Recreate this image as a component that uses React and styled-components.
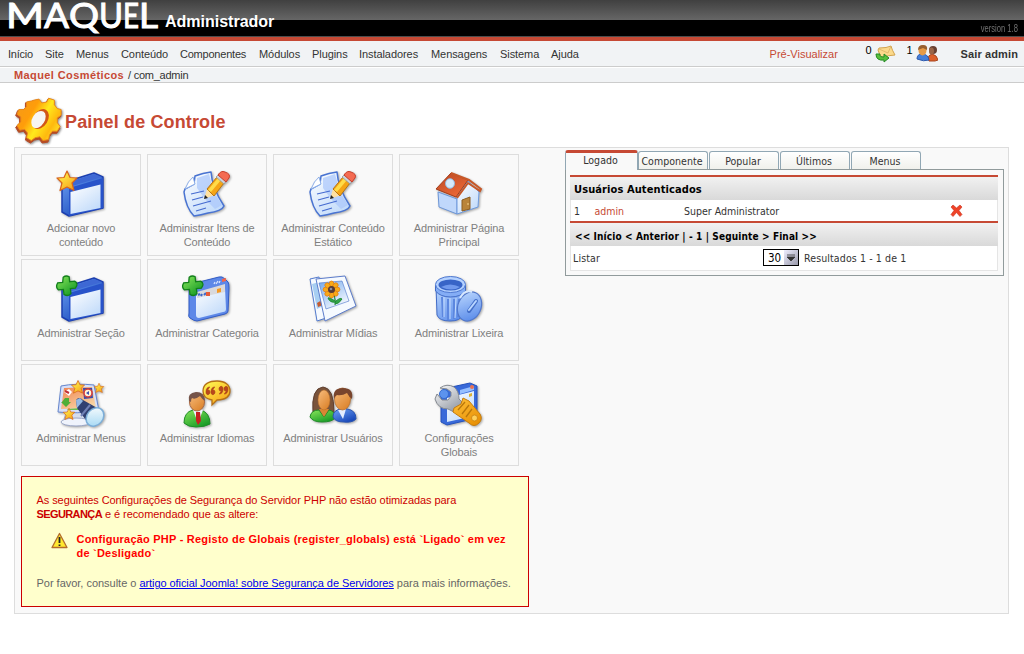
import React from "react";
import styled, { createGlobalStyle } from "styled-components";

const GlobalStyle = createGlobalStyle`
  * { box-sizing: border-box; }
  body { margin: 0; background: #fff; color: #333; font: 11px/14px "Liberation Sans", Arial, sans-serif; }
  a { color: inherit; text-decoration: none; }
`;
const Page = styled.div`width: 1024px; height: 654px; overflow: hidden;`;
const Header = styled.header`
  height: 41px; display: flex; align-items: flex-start; padding-left: 8px;
  background: linear-gradient(#404040 0, #666 20px, #000 20px, #000 36px, #4d4d4d 36px, #4d4d4d 37px, #c64934 37px);
`;
const Logo = styled.svg`width: 157px; height: 36px; display: block; overflow: visible;`;
const Product = styled.h1`
  margin: 13px 0 0; color: #fff; font-size: 16px; line-height: 18px; letter-spacing: 0; white-space: nowrap;
`;
const Version = styled.span`
  margin: 23px 6px 0 auto; color: #737373; font: 10px/12px "Liberation Sans", sans-serif;
  white-space: nowrap; transform: scaleX(0.76); transform-origin: right center;
`;
const MenuBar = styled.nav`
  height: 26px; display: flex; align-items: center; padding: 1px 6px 0 8px;
  background: #f1f3f5; border-bottom: 1px solid #ccc; white-space: nowrap;
`;
const MenuItem = styled.a`width: ${(p) => p.$w}px; letter-spacing: ${(p) => p.$ls ?? -0.07}px;`;
const Preview = styled.a`margin-left: auto; width: 96px; color: #c64934; letter-spacing: 0;`;
const Counter = styled.div`
  display: flex; align-items: flex-start; gap: ${(p) => p.$gap}px; width: ${(p) => p.$w}px; height: 22px; line-height: 14px; color: #000;
  svg { margin-top: 2px; }
`;
const Logout = styled.a`font-weight: bold; letter-spacing: 0.12px;`;
const Breadcrumb = styled.div`
  height: 16px; display: flex; gap: 4px; padding-left: 14px; line-height: 15px;
  background: #f1f3f5; border-top: 1px solid #fff; border-bottom: 1px solid #ccc; letter-spacing: -0.25px;
  b { color: #c64934; letter-spacing: 0.4px; }
`;
const Title = styled.h2`
  margin: 0; height: 64px; padding: 13px 0 0 14px; display: flex; gap: 2px;
  color: #c64934; font-size: 18px; line-height: 52px; letter-spacing: 0.14px;
`;
const Panel = styled.main`
  margin: 0 15px 0 14px; height: 467px; padding: 6px 4px 0 6px; display: flex; justify-content: space-between;
  background: #f9f9f9; border: 1px solid #ddd;
`;
const Left = styled.section`width: 508px;`;
const Grid = styled.div`display: grid; grid-template-columns: repeat(4, 120px); grid-auto-rows: 102px; gap: 3px 6px;`;
const Card = styled.a`
  border: 1px solid #ddd; padding: 14px 4px 0; display: flex; flex-direction: column; align-items: center;
  color: #808080; text-align: center; letter-spacing: -0.14px;
  svg { display: block; width: 48px; height: 50px; margin-bottom: 2px; overflow: visible; filter: drop-shadow(1px 1px 1px #0005); }
  span { white-space: pre-line; }
`;
const Warning = styled.section`
  margin-top: 10px; height: 131px; padding: 16px 14px 0 14.5px; border: 1px solid #c00; background: #ffc; color: #c00;
  white-space: nowrap; letter-spacing: -0.07px;
  p { margin: 0; }
`;
const Keyword = styled.b`letter-spacing: -0.6px;`;
const Alert = styled.div`
  display: flex; margin: 11px 0 16px 14.5px; gap: 8.5px; color: #f00; font-weight: bold; letter-spacing: 0.22px;
`;
const More = styled.p`color: #666; letter-spacing: -0.02px; a { color: #00e; text-decoration: underline; letter-spacing: -0.07px; }`;
const Right = styled.aside`
  width: 439px; margin-top: -4px; font: 10.5px/14px "DejaVu Sans Condensed", "DejaVu Sans", Tahoma, sans-serif;
  white-space: nowrap;
`;
const Tabs = styled.div`display: flex; align-items: flex-end; height: 20px; gap: 1px; position: relative; margin-bottom: -1px;`;
const Tab = styled.button`
  width: ${(p) => (p.$active ? 73 : 70)}px; height: ${(p) => (p.$active ? 20 : 18)}px; padding: 0 2px 0 0;
  margin-right: ${(p) => (p.$active ? -1 : 0)}px; margin-bottom: ${(p) => (p.$active ? 0 : 1)}px;
  border: 1px solid #91a7b4; border-bottom: 0; border-radius: 3px 3px 0 0;
  border-top: ${(p) => (p.$active ? "3px solid #c64934" : "1px solid #91a7b4")};
  background: ${(p) => (p.$active ? "#f9f9f9" : "linear-gradient(#fff, #f1f1ec)")};
  color: #333; font: inherit; line-height: 17px; letter-spacing: 0.05px;
  span { display: block; height: ${(p) => (p.$active ? 18 : 17)}px; line-height: ${(p) => (p.$active ? 14 : 18)}px; }
`;
const TabBody = styled.div`height: 107px; padding: 5px 5px 0 4px; border: 1px solid #919b9c;`;
const Table = styled.div`background: #fff; border: 1px solid #e5e5e5; border-top: 0; height: 96px;`;
const Bar = styled.div`
  margin: 0 -1px; border-top: 2px solid #c64934; height: ${(p) => p.$h}px; line-height: ${(p) => p.$lh}px;
  padding-left: ${(p) => p.$pad}px; color: #000; font-weight: bold; font-size: ${(p) => p.$size}px;
  background: linear-gradient(#f1f1f1, #d9d9d9); letter-spacing: ${(p) => p.$ls}px;
`;
const UserRow = styled.div`
  height: 21px; display: grid; grid-template-columns: 20.5px 89.5px 266px 14px; align-items: center; padding-left: 3px;
  a { color: #c64934; }
`;
const ListRow = styled.div`height: 23px; display: flex; align-items: center; padding-left: 2px; letter-spacing: 0.12px;`;
const ListLabel = styled.span`width: 190px;`;
const Picker = styled.button`
  width: 36px; height: 17px; padding: 0 0 0 4px; margin-right: 5px; display: flex; align-items: center; justify-content: space-between;
  border: 1px solid #000; background: #fff; color: #000; font: 11.5px/14px "DejaVu Sans Condensed", sans-serif;
  svg { background: linear-gradient(135deg, #eef, #99a); }
`;

const Star = ({ x = 10, y = 11, s = 1 }) => (
  <path transform={`translate(${x} ${y}) scale(${s})`} d="M0-10 3-3.5 10-3 5 2 7 9.5 0 6-7 9.5-5 2-10-3-3-3.5Z"
    fill="url(#gold)" stroke="#d9641c" strokeWidth="1.2" strokeLinejoin="round" />
);
const Plus = () => (
  <path d="M7 2q3-2 6 0v5h5q4 3 0 7h-5v5q-3 3-7 0v-5H1q-3-3 0-7h5Z" transform="rotate(-6 10 10)" fill="url(#green)" stroke="#12801b" strokeWidth="1.3" />
);
const Window = () => (
  <g>
    <path d="M5 13 37 3 46 7V38L12 46 5 42Z" fill="url(#blue)" stroke="#1c3fb0" strokeWidth="1.5" strokeLinejoin="round" />
    <path d="M12 18 46 8V38L12 46Z" fill="#2853ca" />
    <path d="M6 14 37 4 45 7 12 17Z" fill="#3e68d4" />
    <path d="M13.500 22 43.500 14.500V38L13.500 44Z" fill="url(#pane)" />
  </g>
);
const NewContent = () => <><Window /><Star /></>;
const Section = () => <><Window /><Plus /></>;
const Category = () => (
  <>
    <path d="M6 14Q6 9 12 8L36 2Q39 1 42 4L45 7Q46 8 46 13L45 36Q45 38 42 39L14 46Q11 46 7 43 5 42 6 38Z" fill="#5d88e8" stroke="#315bc5" />
    <path d="M13 21 42 13 43 34Q43 37 40 37L16 43Q13 43 13 40Z" fill="url(#pane)" />
    <path d="M14 17 42 9V17L14 23Z" fill="#d9d9dc" />
    <path d="m15 20 2-1m1 2 1-2m2 1 2-2" stroke="#3d68cb" strokeWidth="2" />
    <path d="m31 9 1-2m1 2 2-3m1 2 1-2" stroke="#d8e4ff" strokeWidth="1.3" />
    <path d="M23 17h4v4h-4Z" fill="#e65b38" /><path d="m34 14 4-1v4l-4 1Z" fill="#f49a25" /><path d="m39 4 4-1v3l-4 1Z" fill="#f2654a" />
    <Plus />
  </>
);
const Document = () => (
  <>
    <path d="M2 19 11 14 12 6Q20 3 28 2 29 18 41 36 39 41 25 43 18 45 11 46 3 38 1 22Z" fill="url(#pane)" stroke="#4873d2" strokeWidth="1.5" strokeLinejoin="round" />
    <path d="M2 19Q5 11 10 7L12 14Z" fill="#fff" stroke="#8caee8" />
    <path d="M14 8 26 4 31 22 39 35 32 39 22 29 14 18Z" fill="#aac6fb" opacity=".7" />
    <path d="m8 24 13-3M9 30l11-3M10 36l18-5M13 41l10-3" stroke="#456bd0" strokeWidth="1.2" />
    <path d="m21 29 3-10 8 6Z" fill="#ffe1a2" />
    <path d="M24 19 34 7l7 6-10 13Z" fill="#f5a515" stroke="#b57415" /><path d="m25 20 10-12 3 2-10 12Z" fill="#ffdc49" />
    <path d="m33 7 3-3 8 6-3 4Z" fill="#ccd3db" stroke="#8c9198" strokeWidth=".7" />
    <path d="M35 5q3-5 7-3 6 2 4 6l-3 4Z" fill="#f46b52" stroke="#c63d29" />
    <path d="m21 29 1-4 3 3Z" fill="#222" />
  </>
);
const House = () => (
  <>
    <path d="M3 22 22 29V44L4 37Z" fill="#c0d8fb" stroke="#6c95d6" />
    <path d="m22 28 11-17 11 11-1 15-21 7Z" fill="url(#pane)" stroke="#6e9add" />
    <path d="m1 19 15-16 17 7-12 17Z" fill="url(#roof)" stroke="#a33b19" strokeLinejoin="round" />
    <path d="M16 3 34 10 46 19 45 21 33 13 22 28" fill="none" stroke="#c75828" strokeWidth="2" />
    <ellipse cx="15" cy="13.500" rx="4.500" ry="4.800" fill="#d5eafa" stroke="#90b8df" />
    <path d="m27 30 8-3v12l-8 2Z" fill="#b9843a" stroke="#8b5c20" /><circle cx="33" cy="34" r=".8" fill="#ffe09a" />
  </>
);
const Media = () => (
  <>
    <path d="M1 4 10 2 17 43 8 46Z" fill="#f6faff" stroke="#527ace" strokeWidth="1" /><path d="m3 9 7-2 4 24-6 3Z" fill="#a7cef2" /><path d="m8 28 5-3 1 5-5 2Z" fill="#c45b30" />
    <path d="m7 4 29-3 11 30-31 15Z" fill="#f6faff" stroke="#5c7ccb" strokeWidth="1" strokeLinejoin="round" />
    <path d="m10 8 23-2 7 20-23 8Z" fill="url(#photo)" stroke="#4a72c8" strokeWidth=".6" />
    <path d="M25 19q2 7 1 11m0-4q-6-4-7-3 2 5 7 4m0 0q5-5 7-3-3 5-7 5" fill="#32a648" stroke="#238b37" strokeWidth="1" />
    {[0, 45, 90, 135, 180, 225, 270, 315].map((a) => <ellipse key={a} cx="22.500" cy="9" rx="2.400" ry="3" fill="#f8aa18" stroke="#df7a14" strokeWidth=".7" transform={`rotate(${a} 22.500 14.500)`} />)}
    <circle cx="22.500" cy="14.500" r="3.500" fill="#573c36" /><circle cx="22" cy="14" r="1.300" fill="#8c91a0" />
  </>
);
const Trash = () => (
  <>
    <path d="M1 11 2 40Q4 46 15 46T27 40L30 11Z" fill="url(#can)" stroke="#416bc6" />
    <path d="m7 22 1 20m5-18 0 21m6-21v20m5-20-1 18" stroke="#5c87df" strokeWidth="2" /><path d="m9 22 0 20m6-19v21m6-21-1 20" stroke="#c4dcff" strokeWidth="1" />
    <path d="M.500 10v6q5 6 15 6t15-6v-6" fill="#84adf5" stroke="#416bc6" />
    <ellipse cx="15.500" cy="9.500" rx="15" ry="8" fill="#b5d2ff" stroke="#4d77d0" /><ellipse cx="15.500" cy="10" rx="12" ry="5.500" fill="#3864c7" />
    <path d="M6 12q9-5 19 0-8 5-19 0Z" fill="#7199ed" />
    <ellipse cx="34.500" cy="31.500" rx="11.500" ry="15" transform="rotate(24 34.500 31.500)" fill="url(#can)" stroke="#5278cb" strokeWidth="1.200" />
    <path d="M25 23q5-9 12-6" stroke="#d8e9ff" strokeWidth="2" fill="none" />
    <path d="m34 36 7-10" stroke="#446fc9" strokeWidth="4" strokeLinecap="round" /><path d="m34 35 7-9" stroke="#b9d6ff" strokeWidth="2" strokeLinecap="round" />
  </>
);
const Menus = () => (
  <>
    <path d="M7 39 10 31h18l3 9Z" fill="#d7ddec" stroke="#99a7c5" /><ellipse cx="19" cy="42" rx="15" ry="4" fill="#eff3fc" stroke="#9aa6c6" />
    <path d="M4 6Q19 3 37 5L42 31Q19 34 1 32Z" fill="#d6e0fa" stroke="#6485cd" strokeWidth="1" />
    <path d="m7 8 28-1 4 21-35 1Z" fill="url(#screen)" /><path d="m7 12 5-3 3 3-3 4Z" fill="#fff" /><path d="m8 11 4 2" stroke="#c42e35" strokeWidth="2" />
    <path d="M26 8h9l1 10-9 1Z" fill="#384dab" /><circle cx="31" cy="13" r="4" fill="#fff5d7" stroke="#d83b35" strokeWidth="1.500" /><path d="m29 13 3-2v4Z" fill="#3b50b4" />
    <path d="m5 22 3-4h4v4h2l-5 5-5-5Z" fill="#4dae38" /><path d="m10 29 14-1 3 2H11Z" fill="#6cbe51" />
    <path d="M19 20Q22 16 26 20L42 29 31 43 20 28Z" fill="#314071" /><path d="m19 20 4-2 3 3-6 7Z" fill="#93b9e5" /><path d="m33 25-9 11" stroke="#7080b5" strokeWidth="2" />
    <ellipse cx="38" cy="37" rx="8" ry="10" transform="rotate(40 38 37)" fill="url(#lens)" stroke="#7caed8" strokeWidth="1.500" />
    <Star x={21} y={7} s={.65} /><Star x={42} y={8} s={.48} /><Star x={12} y={34} s={.58} />
  </>
);
const Languages = () => (
  <>
    <path d="M1 43Q1 32 10 30h8q9 3 9 14-5 3-14 3-8 0-12-4Z" fill="url(#green)" stroke="#1e8c26" />
    <path d="m10 30 5 13 5-13-5-3Z" fill="#eef4ff" /><path d="m13 32 4 0 1 9-3 4-2-4Z" fill="#c62020" />
    <ellipse cx="14" cy="22" rx="7.500" ry="9" fill="url(#skin)" stroke="#a96843" /><path d="M6 21Q4 13 13 12q9 0 9 9-3-2-5-5-5 4-8 2-1 1-1 4Z" fill="#765449" />
    <path d="M34 1C42 1 47 5 47 11c0 5-4 9-13 9l-5 5v-5c-6-1-9-4-9-9 0-7 6-10 14-10Z" fill="url(#gold)" stroke="#b57017" strokeWidth="1.300" />
    <path d="M27 7q-4 0-4 5c0 4 4 3 4 0q0-2-2-2m7-3q-4 0-4 5c0 4 4 3 4 0q0-2-2-2M36 14q4 0 4-5c0-4-4-3-4 0q0 2 2 2m3 3q4 0 4-5c0-4-4-3-4 0q0 2 2 2" fill="#b9471b" stroke="#a33b19" strokeWidth=".6" />
  </>
);
const Users = () => (
  <>
    <path d="M4 33Q2 8 14 7q11 1 11 25L13 37Z" fill="#79533b" stroke="#604030" />
    <path d="M1 37q1-7 9-7l5 7 5-7q6 1 6 8-3 4-13 4-9 0-12-5Z" fill="url(#green)" stroke="#1e8c26" /><path d="m10 29 5 8 5-8Z" fill="#d98634" /><ellipse cx="15" cy="20" rx="6" ry="10" fill="url(#skin)" stroke="#b66a25" strokeWidth=".5" />
    <path d="M24 37q0-7 8-8h6q9 1 9 10-4 4-12 3-9 0-11-5Z" fill="url(#blue)" stroke="#2954b1" /><path d="m29 30 5 9 3-10Z" fill="#e4edff" />
    <ellipse cx="33.500" cy="19" rx="8" ry="11" fill="url(#skin)" stroke="#b66a25" strokeWidth=".7" /><path d="M25 19Q23 8 34 8t9 11q-3-2-5-6-5 3-10 2-2 1-3 4Z" fill="#78442d" />
  </>
);
const Config = () => (
  <>
    <path d="M6 13Q7 9 12 8L35 3 42 6V38L12 45 6 42Z" fill="#3869d9" stroke="#2451bc" strokeLinejoin="round" /><path d="m12 18 27-7v25l-27 6Z" fill="url(#pane)" /><path d="m25 10 14-4v4l-14 4Z" fill="#96bfff" /><circle cx="37" cy="7" r="2" fill="#e87152" /><path d="m34 14 3-1v3l-3 1Z" fill="#deb134" />
    <circle cx="9" cy="14" r="4.500" fill="#5c93ee" stroke="#366cd0" />
    <path d="M5 8Q12 3 19 7 24 11 24 19L28 23 19 32 13 29Q3 29 0 19L2 14 7 20 13 20 16 16V12L12 9Z" fill="url(#metal)" stroke="#858a92" strokeWidth="1" strokeLinejoin="round" />
    <path d="m28 18 6 3 11 13q3 5-1 9-5 5-10 0L18 32l1-4 7-4Z" fill="url(#handle)" stroke="#c57c0e" strokeWidth="1" strokeLinejoin="round" />
    <path d="m23 30 7-8m-3 12 7-9m-3 12 6-8" stroke="#b9770b" strokeWidth="1.300" /><circle cx="39.500" cy="38" r="3" fill="#ffd05a" stroke="#c88213" strokeWidth=".8" />
  </>
);
const Mail = () => (
  <svg width="21" height="18" viewBox="0 0 21 18"><path d="M4 3q8 0 12-2 1 4 4 9-7 0-13 3-3-4-4-8Z" fill="#fbd98b" stroke="#d2a34e" /><path d="m4 4 9 4 3-7" fill="none" stroke="#dcb264" strokeWidth=".8" /><path d="M1 9h4q-1 3 4 3v-3l5 4-5 4v-2q-8 1-8-6Z" fill="#58bf3c" stroke="#258a25" /></svg>
);
const People = () => (
  <svg width="22" height="17" viewBox="0 0 22 17"><path d="M12 14q0-4 4-5 5 1 6 6l-3 1h-6Z" fill="#db602b" stroke="#aa451e" /><circle cx="17" cy="5" r="4" fill="#674133" /><ellipse cx="15.500" cy="6" rx="2.500" ry="3.500" fill="#9a6548" /><path d="M1 14q0-5 5-5 6 0 7 6-5 2-12-1Z" fill="#467fd9" stroke="#2d5aae" /><ellipse cx="6.500" cy="5.500" rx="4" ry="5" fill="#e79b47" /><path d="M2 5q0-5 5-5t4 5L7 3Z" fill="#976031" /></svg>
);

const Defs = () => (
  <svg width="0" height="0" style={{ position: "absolute" }}><defs>
    {[["gold", "#ffff55", "#f7a51b"], ["green", "#8be75b", "#159a25"], ["blue", "#6fa3f5", "#1746b9"], ["pane", "#ffffff", "#c2dbfa"], ["roof", "#b74825", "#ee6935"], ["photo", "#73a8ec", "#f8fbff"], ["can", "#c0dbff", "#5c8dea"], ["screen", "#f08350", "#f7d6a6"], ["lens", "#ffffff", "#a8daf4"], ["skin", "#f8bd7e", "#dc842d"], ["metal", "#ffffff", "#939aa4"], ["handle", "#ffc13a", "#e99206"]].map(([id, a, b]) => (
      <linearGradient key={id} id={id} x1="0" y1="0" x2=".7" y2="1"><stop stopColor={a} /><stop offset="1" stopColor={b} /></linearGradient>
    ))}
    <linearGradient id="gear" gradientUnits="userSpaceOnUse" x1="2" y1="10" x2="46" y2="36"><stop stopColor="#f69a16" /><stop offset=".3" stopColor="#ff9d0a" /><stop offset=".55" stopColor="#ffe91c" /><stop offset=".8" stopColor="#ffb90e" /><stop offset="1" stopColor="#ffe52b" /></linearGradient>
  </defs></svg>
);
const GearIcon = styled.svg`display: block; width: 49px; height: 49px; filter: drop-shadow(1px 1px 1px #0007);`;
const gearOutline = "M19 3 24 2 27 6 32 5 34 1 40 3 40 8 43 12 47 13 47 19 43 22 43 27 46 31 43 36 38 36 35 40 34 45 28 46 25 42 20 43 16 46 11 43 12 38 9 34 4 35 1 30 5 26 5 21 1 18 3 13 8 13 11 10 11 5 16 4Z";
const Gear = () => (
  <GearIcon viewBox="-1 -1 50 50">
    <path d={gearOutline} transform="translate(-.3 1)" fill="#b64b24" stroke="#b64b24" strokeWidth="1" strokeLinejoin="round" />
    <path d={gearOutline} transform="translate(1 .3) scale(.98 .96)" fill="url(#gear)" stroke="#e8861b" strokeWidth="1" strokeLinejoin="round" />
    <ellipse cx="26" cy="22.500" rx="7.500" ry="11" transform="rotate(32 26 22.500)" fill="#d25618" /><ellipse cx="24" cy="23" rx="6.300" ry="9.500" transform="rotate(32 24 23)" fill="#f7f5f4" />
  </GearIcon>
);

const menu = [["Início", 37, -0.25], ["Site", 31], ["Menus", 45], ["Conteúdo", 59], ["Componentes", 79, -0.22], ["Módulos", 53], ["Plugins", 47], ["Instaladores", 72], ["Mensagens", 69], ["Sistema", 51], ["Ajuda", 40]];
const cards = [
  ["Adcionar novo\nconteúdo", NewContent], ["Administrar Itens de\nConteúdo", Document], ["Administrar Conteúdo\nEstático", Document], ["Administrar Página\nPrincipal", House],
  ["Administrar Seção", Section], ["Administrar Categoria", Category], ["Administrar Mídias", Media], ["Administrar Lixeira", Trash],
  ["Administrar Menus", Menus], ["Administrar Idiomas", Languages], ["Administrar Usuários", Users], ["Configurações\nGlobais", Config],
];
const wordmark = [["M", -2, 38], ["A", 36, 25], ["Q", 61, 30], ["U", 91, 24], ["E", 115, 16], ["L", 131, 19]];

export default function App() {
  return (
    <Page>
      <GlobalStyle />
      <Defs />
      <Header>
        <Logo viewBox="0 0 157 36">
          <g fill="#fff" stroke="#fff" strokeWidth="1" fontFamily="Lato, sans-serif" fontSize="34">
            {wordmark.map(([c, x, w]) => <text key={c} x={x} y="28" textLength={w} lengthAdjust="spacingAndGlyphs">{c}</text>)}
          </g>
        </Logo>
        <Product>Administrador</Product>
        <Version>version 1.8</Version>
      </Header>
      <MenuBar>
        {menu.map(([t, w, ls]) => <MenuItem key={t} $w={w} $ls={ls}>{t}</MenuItem>)}
        <Preview>Pré-Visualizar</Preview>
        <Counter $w={41} $gap={3}>0<Mail /></Counter>
        <Counter $w={54} $gap={3}>1<People /></Counter>
        <Logout>Sair admin</Logout>
      </MenuBar>
      <Breadcrumb><b>Maquel Cosméticos</b><span>/ com_admin</span></Breadcrumb>
      <Title><Gear />Painel de Controle</Title>
      <Panel>
        <Left>
          <Grid>
            {cards.map(([label, Icon]) => <Card key={label}><svg viewBox="0 -1 48 50"><Icon /></svg><span>{label}</span></Card>)}
          </Grid>
          <Warning>
            <p>As seguintes Configurações de Segurança do Servidor PHP não estão otimizadas para<br /><Keyword>SEGURANÇA</Keyword> e é recomendado que as altere:</p>
            <Alert>
              <svg width="17" height="17" viewBox="0 0 17 17"><path d="M8.500 1.500 16 15.500H1Z" fill="#ffe92e" stroke="#b36b2b" strokeWidth="1.300" strokeLinejoin="round" /><path d="M8.500 5v6m0 1.500v1.500" stroke="#222" strokeWidth="1.800" /></svg>
              <span>Configuração PHP - Registo de Globais (register_globals) está `Ligado` em vez<br />de `Desligado`</span>
            </Alert>
            <More>Por favor, consulte o <a>artigo oficial Joomla! sobre Segurança de Servidores</a> para mais informações.</More>
          </Warning>
        </Left>
        <Right>
          <Tabs><Tab $active><span>Logado</span></Tab><Tab><span>Componente</span></Tab><Tab><span>Popular</span></Tab><Tab><span>Últimos</span></Tab><Tab><span>Menus</span></Tab></Tabs>
          <TabBody>
            <Table>
              <Bar $h={25} $lh={25} $pad={4} $size={11} $ls={0.1}>Usuários Autenticados</Bar>
              <UserRow><span>1</span><a>admin</a><span>Super Administrator</span>
                <svg width="13" height="13" viewBox="0 0 13 13"><path d="m1 3 2-2 3.500 3L10 1l2 2-3 3.500 3 4-2 2-3.500-4-3.500 4-2-2 3-4Z" fill="#ef4328" stroke="#c8301c" strokeWidth=".6" /></svg>
              </UserRow>
              <Bar $h={25} $lh={28} $pad={5} $size={10} $ls={0.13}>&lt;&lt; Início &lt; Anterior | - 1 | Seguinte &gt; Final &gt;&gt;</Bar>
              <ListRow><ListLabel>Listar</ListLabel>
                <Picker>30<svg width="14" height="15" viewBox="0 0 14 15"><path d="M3 5h8M3 7h8L7 11Z" fill="#333" stroke="#333" strokeWidth=".8" /></svg></Picker>
                <span>Resultados 1 - 1 de 1</span>
              </ListRow>
            </Table>
          </TabBody>
        </Right>
      </Panel>
    </Page>
  );
}
